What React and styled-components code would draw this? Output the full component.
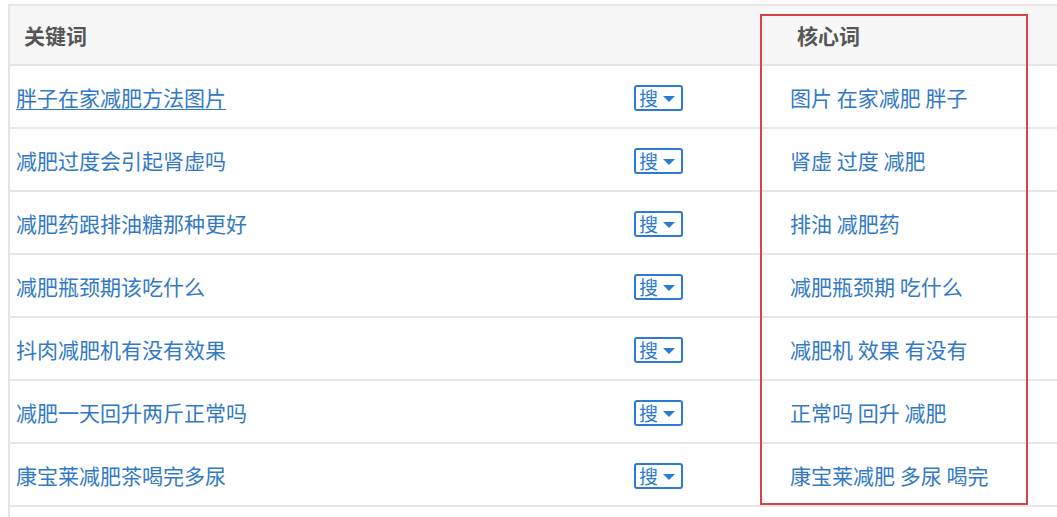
import React from "react";
import styled, { createGlobalStyle } from "styled-components";

const Global = createGlobalStyle`
  html, body { margin: 0; padding: 0; background: #fff; }
  body { font-family: "Noto Sans CJK SC", "Liberation Sans", sans-serif; }
`;

const Page = styled.div`
  position: relative;
  width: 1057px;
  height: 517px;
  overflow: hidden;
  padding-top: 4px;
  padding-left: 8px;
  box-sizing: border-box;
`;

const Table = styled.div`
  display: grid;
  grid-template-columns: 618px 148px 400px;
  border-top: 2px solid #e6e6e6;
  border-left: 2px solid #e6e6e6;
  width: 1166px;
`;

const HeadCell = styled.div`
  background: #f7f7f7;
  height: 58px;
  display: flex;
  align-items: center;
  padding-left: ${(p) => p.$pl}px;
  font-size: 21px;
  font-weight: 700;
  color: #555;
  border-bottom: 2px solid #e6e6e6;
`;

const Cell = styled.div`
  height: 61px;
  display: flex;
  align-items: center;
  padding-left: ${(p) => p.$pl}px;
  border-bottom: 2px solid #e6e6e6;
  font-size: 21px;
  color: #3179c6;
  white-space: nowrap;
`;

const Link = styled.a`
  color: #3179c6;
  text-decoration: ${(p) => (p.$u ? "underline" : "none")};
  text-underline-offset: 3px;
  text-decoration-thickness: 1px;
  cursor: pointer;
`;

const SearchBtn = styled.span`
  display: inline-flex;
  align-items: center;
  gap: 5px;
  box-sizing: border-box;
  width: 49px;
  height: 26px;
  margin-top: 2px;
  border: 2px solid #2b7bd6;
  border-radius: 3px;
  padding-left: 3px;
  font-size: 19px;
  line-height: 1;
  color: #2b7bd6;
`;

const Caret = styled.span`
  width: 0;
  height: 0;
  margin-top: 2px;
  border-left: 6px solid transparent;
  border-right: 6px solid transparent;
  border-top: 6px solid #2b7bd6;
`;

const Highlight = styled.div`
  position: absolute;
  left: 760px;
  top: 14px;
  width: 268px;
  height: 491px;
  box-sizing: border-box;
  border: 2px solid #d6454a;
  pointer-events: none;
`;

const rows = [
  ["胖子在家减肥方法图片", "图片 在家减肥 胖子"],
  ["减肥过度会引起肾虚吗", "肾虚 过度 减肥"],
  ["减肥药跟排油糖那种更好", "排油 减肥药"],
  ["减肥瓶颈期该吃什么", "减肥瓶颈期 吃什么"],
  ["抖肉减肥机有没有效果", "减肥机 效果 有没有"],
  ["减肥一天回升两斤正常吗", "正常吗 回升 减肥"],
  ["康宝莱减肥茶喝完多尿", "康宝莱减肥 多尿 喝完"],
];

export default function App() {
  return (
    <>
      <Global />
      <Page>
        <Table>
          <HeadCell $pl={14}>关键词</HeadCell>
          <HeadCell $pl={8}></HeadCell>
          <HeadCell $pl={21}>核心词</HeadCell>
          {rows.map(([kw, core], i) => (
            <React.Fragment key={i}>
              <Cell $pl={6}>
                <Link $u={i === 0}>{kw}</Link>
              </Cell>
              <Cell $pl={6}>
                <SearchBtn>
                  搜<Caret />
                </SearchBtn>
              </Cell>
              <Cell $pl={14}>{core}</Cell>
            </React.Fragment>
          ))}
          <Cell $pl={6} />
          <Cell $pl={6} />
          <Cell $pl={14} />
        </Table>
        <Highlight />
      </Page>
    </>
  );
}
